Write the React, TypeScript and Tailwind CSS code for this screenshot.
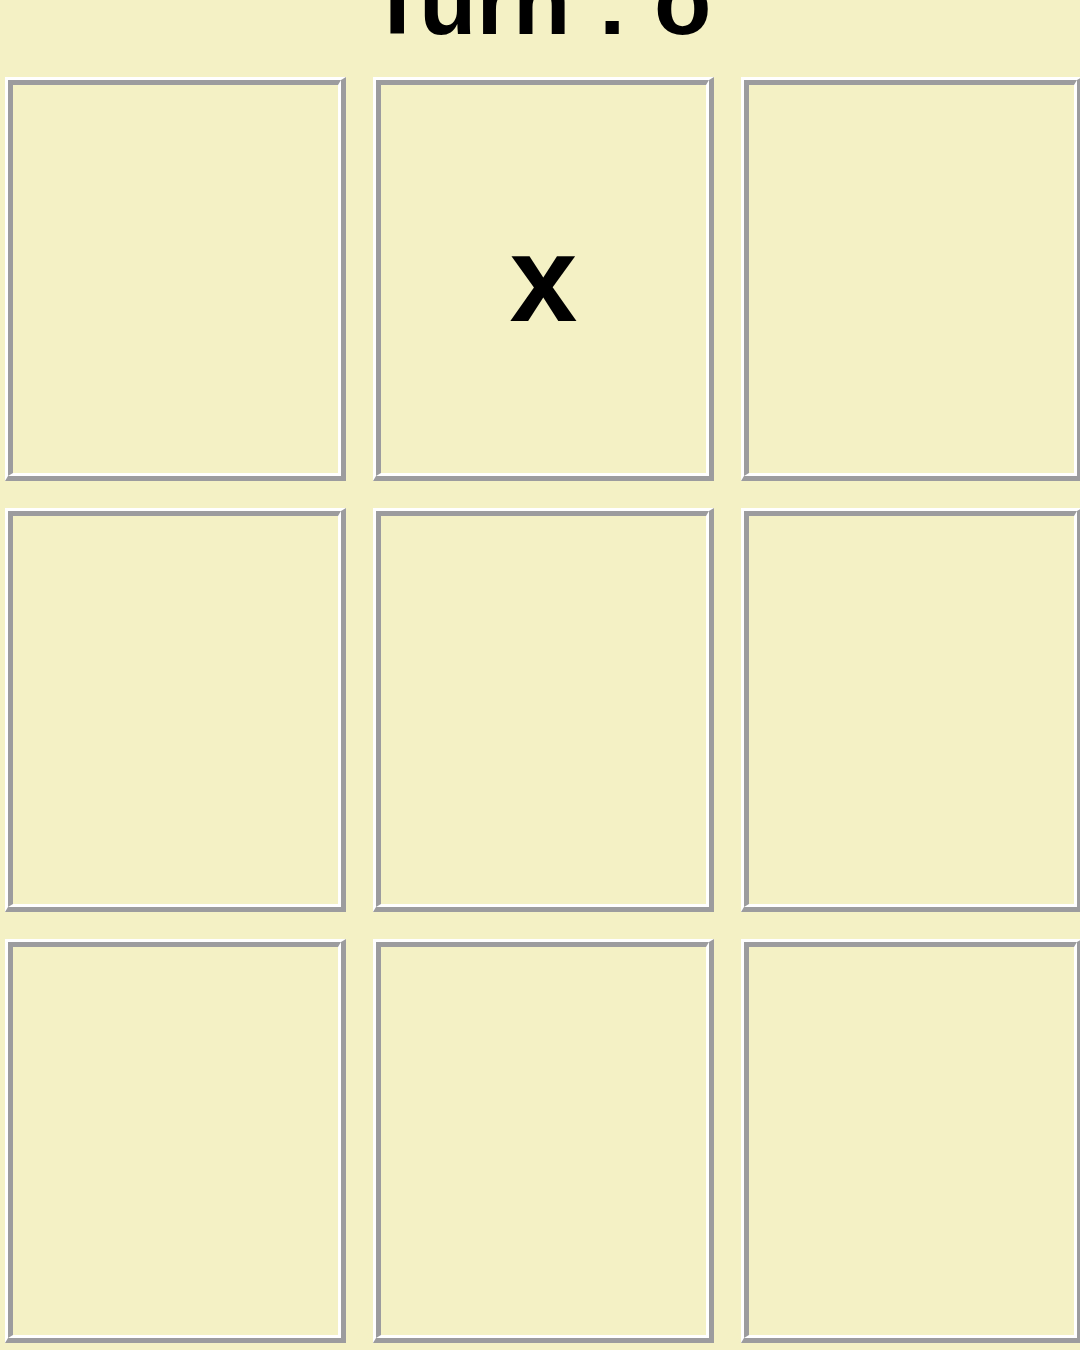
import React, { useState } from 'react';

type Mark = 'x' | 'o' | '';

const Cell = ({ value, onClick }: { value: Mark; onClick: () => void }) => (
  <div
    className="h-[404px] border-t-[3px] border-l-[3px] border-b-[5px] border-r-[5px] border-t-white border-l-white border-b-[#9c9c9e] border-r-[#9c9c9e]"
    onClick={onClick}
  >
    <div className="flex h-full w-full items-center justify-center border-t-[5px] border-l-[5px] border-b-[3px] border-r-[3px] border-t-[#9c9c9e] border-l-[#9c9c9e] border-b-white border-r-white">
      <span className="text-[122px] font-bold leading-[140px] text-black">{value}</span>
    </div>
  </div>
);

export default function App() {
  const [board, setBoard] = useState<Mark[]>(['', 'x', '', '', '', '', '', '', '']);
  const [turn, setTurn] = useState<'x' | 'o'>('o');

  const play = (i: number) => {
    if (board[i]) return;
    const next = [...board];
    next[i] = turn;
    setBoard(next);
    setTurn(turn === 'x' ? 'o' : 'x');
  };

  return (
    <div
      className="h-[1350px] w-[1080px] overflow-hidden bg-[#f4f1c5]"
      style={{ fontFamily: '"Liberation Sans", Arial, sans-serif' }}
    >
      <h1 className="-mt-[52px] text-center text-[94px] font-bold leading-[108px] text-black">Turn : {turn}</h1>
      <div className="ml-[5px] mt-[21px] grid grid-cols-[341px_341px_341px] gap-x-[27px] gap-y-[27px]">
        {board.map((v, i) => (
          <Cell key={i} value={v} onClick={() => play(i)} />
        ))}
      </div>
    </div>
  );
}
